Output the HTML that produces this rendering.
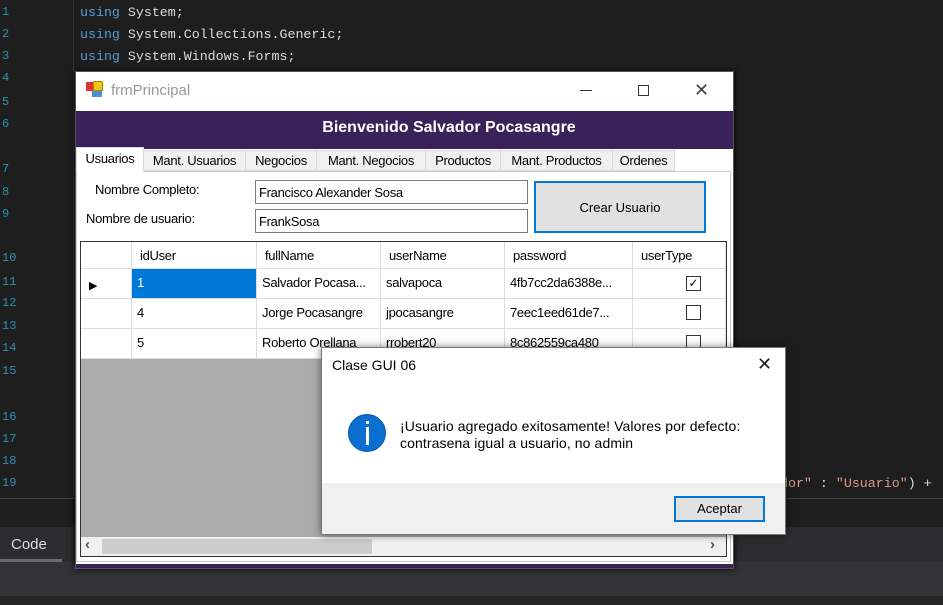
<!DOCTYPE html>
<html><head><meta charset="utf-8"><style>
*{margin:0;padding:0;box-sizing:border-box}
body{width:943px;height:605px;background:#1e1e1e;position:relative;overflow:hidden;font-family:"Liberation Sans",sans-serif}
.a{position:absolute}
.ln{position:absolute;left:2px;color:#2b91af;font:12px "Liberation Mono",monospace}
.code{position:absolute;left:80px;color:#dcdcdc;font:13.3px "Liberation Mono",monospace;white-space:pre}
.kw{color:#569cd6}
.t{font-size:13px;color:#000;position:absolute;letter-spacing:-0.3px}
.tab{position:absolute;top:150px;height:21px;background:#f0f0f0;border:1px solid #d9d9d9;font-size:13px;padding:2px 0;text-align:center;letter-spacing:-0.3px}
.cell{position:absolute;border-right:1px solid #dcdcdc;border-bottom:1px solid #dcdcdc;font-size:13px;padding:6px 5px;letter-spacing:-0.3px;height:30px;background:#fff}
.box{position:absolute;width:15px;height:15px;border:1px solid #333;background:#fff}
</style></head><body>
<div class="a" style="left:73px;top:0;width:1px;height:498px;background:#333"></div>
<div class="ln" style="top:5px">1</div><div class="ln" style="top:27px">2</div><div class="ln" style="top:49px">3</div><div class="ln" style="top:71px">4</div><div class="ln" style="top:95px">5</div><div class="ln" style="top:117px">6</div><div class="ln" style="top:162px">7</div><div class="ln" style="top:185px">8</div><div class="ln" style="top:207px">9</div><div class="ln" style="top:251px">10</div><div class="ln" style="top:275px">11</div><div class="ln" style="top:296px">12</div><div class="ln" style="top:319px">13</div><div class="ln" style="top:341px">14</div><div class="ln" style="top:364px">15</div><div class="ln" style="top:410px">16</div><div class="ln" style="top:432px">17</div><div class="ln" style="top:454px">18</div><div class="ln" style="top:476px">19</div>
<div class="code" style="top:5px"><span class="kw">using</span> System;</div>
<div class="code" style="top:27px"><span class="kw">using</span> System.Collections.Generic;</div>
<div class="code" style="top:49px"><span class="kw">using</span> System.Windows.Forms;</div>
<div class="code" style="top:476px;left:772px"><span style="color:#d69d85">ador"</span> : <span style="color:#d69d85">"Usuario"</span>) +</div>
<div class="a" style="left:0;top:498px;width:943px;height:29px;background:#1e1e1e;border-top:1px solid #3f3f46"></div>
<div class="a" style="left:0;top:527px;width:943px;height:35px;background:#2d2d30"></div>
<div class="a" style="left:0;top:527px;width:62px;height:35px;background:#2d2d30;border-bottom:3px solid #6b6b6b;color:#ddd;font-size:15px;padding:9px 11px">Code</div>
<div class="a" style="left:0;top:562px;width:943px;height:34px;background:#333337"></div>
<div class="a" style="left:0;top:596px;width:943px;height:9px;background:#252526"></div>

<div class="a" style="left:75px;top:71px;width:659px;height:498px;background:#fff;border:1px solid #555;box-shadow:0 0 6px #000"></div>
<div class="a" style="left:86px;top:82px;width:9px;height:9px;background:#d33"></div><div class="a" style="left:93px;top:81px;width:10px;height:10px;background:#f3c21a;border:1px solid #b80"></div><div class="a" style="left:92px;top:91px;width:10px;height:6px;background:#4a8fd8"></div>
<div class="a" style="left:111px;top:82px;font-size:15px;color:#999">frmPrincipal</div>
<div class="a" style="left:580px;top:90px;width:12px;height:1px;background:#333"></div>
<div class="a" style="left:638px;top:85px;width:11px;height:11px;border:1px solid #333"></div>
<div class="a" style="left:694px;top:80px;font-size:18px;color:#444;font-weight:lighter">✕</div>
<div class="a" style="left:76px;top:111px;width:657px;height:38px;background:#3b2159"></div>
<div class="a" style="left:76px;top:119px;width:746px;text-align:center;color:#fff;font-weight:bold;font-size:16px">Bienvenido Salvador Pocasangre</div>
<div class="a" style="left:76px;top:171px;width:655px;height:391px;background:#fff;border:1px solid #ccc"></div>
<div class="tab" style="left:143px;width:103px">Mant. Usuarios</div>
<div class="tab" style="left:245px;width:72px">Negocios</div>
<div class="tab" style="left:316px;width:110px">Mant. Negocios</div>
<div class="tab" style="left:425px;width:76px">Productos</div>
<div class="tab" style="left:500px;width:113px">Mant. Productos</div>
<div class="tab" style="left:612px;width:63px">Ordenes</div>
<div class="tab" style="left:76px;top:147px;width:68px;height:25px;background:#fff;border-bottom:none;padding-top:3px">Usuarios</div>
<div class="t" style="left:95px;top:182px">Nombre Completo:</div>
<div class="t" style="left:86px;top:211px">Nombre de usuario:</div>
<div class="a" style="left:255px;top:180px;width:273px;height:24px;border:1px solid #7a7a7a;font-size:13px;padding:4px 3px;letter-spacing:-0.3px">Francisco Alexander Sosa</div>
<div class="a" style="left:255px;top:209px;width:273px;height:24px;border:1px solid #7a7a7a;font-size:13px;padding:4px 3px;letter-spacing:-0.3px">FrankSosa</div>
<div class="a" style="left:534px;top:181px;width:172px;height:52px;background:#e1e1e1;border:2px solid #0078d7;font-size:13px;text-align:center;line-height:50px">Crear Usuario</div>
<div class="a" style="left:80px;top:241px;width:647px;height:316px;background:#ababab;border:1px solid #333"></div>
<div class="cell" style="left:81px;top:242px;width:51px;height:27px"></div>
<div class="cell" style="left:132px;top:242px;width:125px;height:27px;padding:6px 8px">idUser</div>
<div class="cell" style="left:257px;top:242px;width:124px;height:27px;padding:6px 8px">fullName</div>
<div class="cell" style="left:381px;top:242px;width:124px;height:27px;padding:6px 8px">userName</div>
<div class="cell" style="left:505px;top:242px;width:128px;height:27px;padding:6px 8px">password</div>
<div class="cell" style="left:633px;top:242px;width:93px;height:27px;padding:6px 8px">userType</div>
<div class="cell" style="left:81px;top:269px;width:51px;padding:8px"><span style="font-size:11px">▶</span></div>
<div class="cell" style="left:132px;top:269px;width:125px;background:#0078d7;color:#fff">1</div>
<div class="cell" style="left:257px;top:269px;width:124px">Salvador Pocasa...</div>
<div class="cell" style="left:381px;top:269px;width:124px">salvapoca</div>
<div class="cell" style="left:505px;top:269px;width:128px">4fb7cc2da6388e...</div>
<div class="cell" style="left:633px;top:269px;width:93px"></div>
<div class="box" style="left:686px;top:276px;font-size:12px;line-height:13px;text-align:center">✓</div>
<div class="cell" style="left:81px;top:299px;width:51px"></div>
<div class="cell" style="left:132px;top:299px;width:125px">4</div>
<div class="cell" style="left:257px;top:299px;width:124px">Jorge Pocasangre</div>
<div class="cell" style="left:381px;top:299px;width:124px">jpocasangre</div>
<div class="cell" style="left:505px;top:299px;width:128px">7eec1eed61de7...</div>
<div class="cell" style="left:633px;top:299px;width:93px"></div>
<div class="box" style="left:686px;top:305px"></div>
<div class="cell" style="left:81px;top:329px;width:51px"></div>
<div class="cell" style="left:132px;top:329px;width:125px">5</div>
<div class="cell" style="left:257px;top:329px;width:124px">Roberto Orellana</div>
<div class="cell" style="left:381px;top:329px;width:124px">rrobert20</div>
<div class="cell" style="left:505px;top:329px;width:128px">8c862559ca480</div>
<div class="cell" style="left:633px;top:329px;width:93px"></div>
<div class="box" style="left:686px;top:335px"></div>
<div class="a" style="left:81px;top:537px;width:645px;height:19px;background:#f0f0f0"></div>
<div class="a" style="left:102px;top:539px;width:270px;height:15px;background:#cdcdcd"></div>
<div class="a" style="left:85px;top:536px;font-size:15px;color:#555;font-weight:bold">‹</div>
<div class="a" style="left:710px;top:536px;font-size:15px;color:#555;font-weight:bold">›</div>
<div class="a" style="left:76px;top:564px;width:657px;height:4px;background:#3b2159"></div>

<div class="a" style="left:321px;top:347px;width:465px;height:188px;background:#fff;border:1px solid #777;box-shadow:0 0 8px rgba(0,0,0,.5)"></div>
<div class="a" style="left:322px;top:483px;width:463px;height:51px;background:#f0f0f0"></div>
<div class="a" style="left:332px;top:357px;font-size:14px">Clase GUI 06</div>
<div class="a" style="left:757px;top:354px;font-size:18px;color:#222">✕</div>
<div class="a" style="left:348px;top:414px;width:38px;height:38px;border-radius:50%;background:#0a6fd0;border:1px solid #0a58a8"></div>
<div class="a" style="left:366px;top:421px;width:3px;height:3px;background:#fff"></div>
<div class="a" style="left:366px;top:427px;width:3px;height:18px;background:#fff"></div>
<div class="a" style="left:400px;top:418px;font-size:14px;line-height:17px;letter-spacing:0.1px">¡Usuario agregado exitosamente! Valores por defecto:<br>contrasena igual a usuario, no admin</div>
<div class="a" style="left:674px;top:496px;width:91px;height:26px;background:#e1e1e1;border:2px solid #0078d7;font-size:13px;text-align:center;line-height:22px">Aceptar</div>
</body></html>
